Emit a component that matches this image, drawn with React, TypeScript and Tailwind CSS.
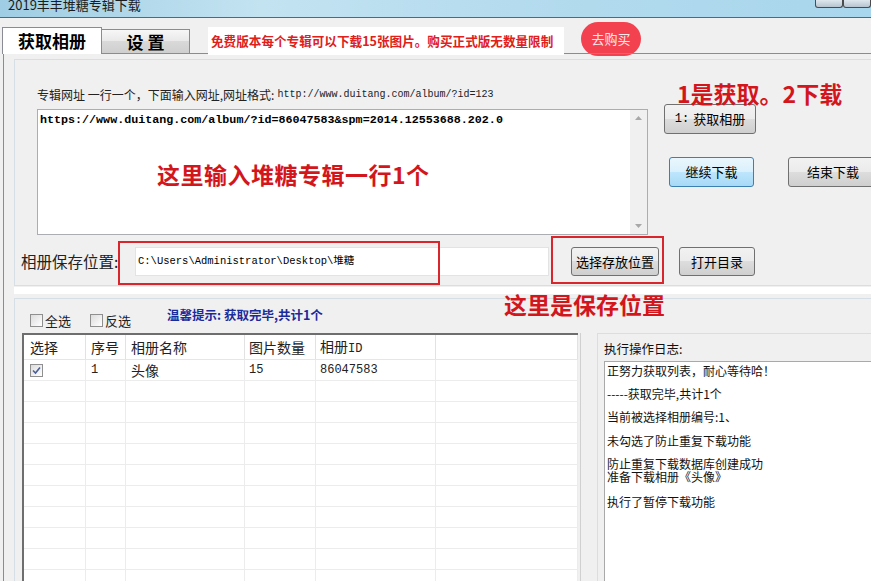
import clsx from 'clsx';

const cjk = "font-['Noto_Sans_CJK_SC',sans-serif]";
const mono = "font-['Liberation_Mono','Noto_Sans_CJK_SC',monospace]";

function WinButton({
  children,
  className,
  focused,
}: {
  children: React.ReactNode;
  className?: string;
  focused?: boolean;
}) {
  return (
    <div
      className={clsx(
        'flex shrink-0 items-center justify-center rounded-[3px] border text-[13px] text-black',
        focused
          ? 'border-[#3c7fb1] bg-[linear-gradient(#eaf6fd,#d9f0fc_50%,#bee6fd_50%,#a7d9f5)]'
          : 'border-[#707070] bg-[linear-gradient(#f2f2f2,#ebebeb_50%,#dddddd_50%,#cfcfcf)]',
        className,
      )}
    >
      {children}
    </div>
  );
}

function CheckBox({ checked }: { checked?: boolean }) {
  return (
    <div className="flex h-[13px] w-[13px] shrink-0 items-center justify-center border border-[#8f8f8f] bg-[linear-gradient(135deg,#dcdcdc,#ffffff)]">
      {checked && (
        <svg width="9" height="9" viewBox="0 0 9 9">
          <path d="M1 4.5 L3.5 7 L8 1.5" fill="none" stroke="#4a5f97" strokeWidth="1.6" />
        </svg>
      )}
    </div>
  );
}

const cols = [
  { w: 'w-[62px]', pl: 'pl-[6px]', head: '选择' },
  { w: 'w-[40px]', pl: 'pl-[5px]', head: '序号' },
  { w: 'w-[119px]', pl: 'pl-[5px]', head: '相册名称' },
  { w: 'w-[71px]', pl: 'pl-[4px]', head: '图片数量' },
  { w: 'w-[120px]', pl: 'pl-[4px]', head: '相册ID' },
  { w: 'flex-1', pl: 'pl-[4px]', head: '' },
];

const logLines = [
  { text: '正努力获取列表，耐心等待哈！', mt: 'mt-[2px]' },
  { text: '-----获取完毕,共计1个', mt: 'mt-[10px]' },
  { text: '当前被选择相册编号:1、', mt: 'mt-[10px]' },
  { text: '未勾选了防止重复下载功能', mt: 'mt-[11px]' },
  { text: '防止重复下载数据库创建成功', mt: 'mt-[10px]' },
  { text: '准备下载相册《头像》', mt: 'mt-0' },
  { text: '执行了暂停下载功能', mt: 'mt-[12px]' },
];

export default function App() {
  return (
    <div className={clsx('relative flex h-[581px] w-[871px] flex-col overflow-hidden bg-[#f0f0f0]', cjk)}>
      {/* title bar */}
      <div className="relative flex h-[18px] shrink-0 items-start border-b border-[#4d6a80] bg-[linear-gradient(90deg,#9fcde3,#c3e3f1_30%,#b4dbee_60%,#a8d6ec)]">
        <div className="ml-[8px] mt-[-4px] text-[13px] leading-[18px] text-[#1c1c1c]">2019丰丰堆糖专辑下载</div>
        <div className="ml-auto mr-0 flex h-[8px]">
          <div className="h-[8px] w-[28px] rounded-b-[3px] border border-t-0 border-[#4b4b4b] bg-[linear-gradient(#dfe7ee,#b6c3cf)]" />
          <div className="h-[8px] w-[28px] rounded-b-[3px] border border-t-0 border-[#4b4b4b] bg-[linear-gradient(#dfe7ee,#b6c3cf)]" />
        </div>
      </div>

      {/* tab strip */}
      <div className="flex h-[35px] shrink-0 items-start">
        <div className="relative z-10 ml-[2px] mt-[9px] flex h-[27px] w-[100px] items-center justify-center border border-b-0 border-[#898c95] bg-white text-[17px] font-bold text-black">
          获取相册
        </div>
        <div className="mt-[11px] flex h-[24px] w-[88px] items-center justify-center border border-l-0 border-b-0 border-[#898c95] bg-[linear-gradient(#f7f7f7,#e8e8e8_50%,#d9d9d9_50%,#cfcfcf)] text-[17px] font-bold text-black">
          设&nbsp;置
        </div>
        <div className="relative z-10 ml-[18px] mt-[9px] flex h-[28px] w-[356px] items-center whitespace-nowrap bg-white pl-[3px] text-[12.6px] font-bold text-[#e0201b]">
          免费版本每个专辑可以下载15张图片。购买正式版无数量限制
        </div>
        <div className="ml-[17px] mt-[4px] flex h-[34px] w-[60px] items-center justify-center rounded-[17px] bg-[#f4414f] text-[13px] text-[#ffe9ea]">
          去购买
        </div>
      </div>

      {/* tab body */}
      <div className="ml-[3px] flex flex-1 flex-col border-l border-t border-[#898c95]">
        {/* top group */}
        <div className="ml-[10px] mt-[5px] h-[227px] w-[880px] shrink-0 border border-[#d5dfe5]">
          <div className="flex">
            <div className="ml-[22px] flex w-[611px] flex-col">
              <div className="mt-[28px] flex items-center text-[12px] leading-[14px] text-[#222]">
                <span>专辑网址 一行一个，下面输入网址,网址格式:</span>
                <span className={clsx('ml-[3px] text-[10px]', mono)}>http://www.duitang.com/album/?id=123</span>
              </div>
              <div className="mt-[7px] flex h-[126px] border border-[#abadb3] bg-white">
                <div className={clsx('flex-1 pl-[2px] pt-[3px] text-[11.7px] font-bold leading-[14px] text-black', mono)}>
                  https://www.duitang.com/album/?id=86047583&amp;spm=2014.12553688.202.0
                </div>
                <div className="flex w-[17px] flex-col items-center justify-between bg-[#f0f0f0] py-[6px]">
                  <svg width="7" height="4" viewBox="0 0 7 4">
                    <path d="M0 4 L3.5 0 L7 4 Z" fill="#a8a8a8" />
                  </svg>
                  <svg width="7" height="4" viewBox="0 0 7 4">
                    <path d="M0 0 L3.5 4 L7 0 Z" fill="#a8a8a8" />
                  </svg>
                </div>
              </div>
            </div>
            <div className="ml-[16px] flex flex-col">
              <WinButton className="mt-[44px] h-[30px] w-[92px]">
                <span className={clsx('text-[12px]', mono)}>1:</span>
                <span className="ml-[4px]">获取相册</span>
              </WinButton>
              <div className="mt-[23px] flex">
                <WinButton focused className="ml-[5px] h-[30px] w-[85px]">
                  继续下载
                </WinButton>
                <WinButton className="ml-[34px] h-[30px] w-[90px]">结束下载</WinButton>
              </div>
            </div>
          </div>

          {/* save row */}
          <div className="mt-[11px] flex h-[31px] items-center">
            <div className="ml-[6px] w-[114px] text-[15.5px] text-[#222]">相册保存位置:</div>
            <div className="flex h-[29px] w-[414px] items-center border border-[#e3e3e3] bg-white pl-[2px]">
              <span className={clsx('text-[10.5px] text-black', mono)}>C:\Users\Administrator\Desktop\堆糖</span>
            </div>
            <WinButton className="ml-[22px] h-[29px] w-[88px]">选择存放位置</WinButton>
            <WinButton className="ml-[20px] h-[29px] w-[76px]">打开目录</WinButton>
          </div>
        </div>

        <div className="ml-[10px] mt-[1px] h-[7px] w-[880px] shrink-0 bg-white" />

        {/* bottom group */}
        <div className="ml-[10px] mt-[4px] flex w-[880px] flex-1 flex-col border border-[#d5dfe5]">
          <div className="flex h-[34px] items-end pb-[3px]">
            <div className="ml-[15px] flex items-center">
              <CheckBox />
              <span className="ml-[2px] text-[13px] text-[#222]">全选</span>
            </div>
            <div className="ml-[19px] flex items-center">
              <CheckBox />
              <span className="ml-[2px] text-[13px] text-[#222]">反选</span>
            </div>
            <div className="mb-[5px] ml-[36px] text-[12.5px] font-bold text-[#1b2a9a]">温馨提示: 获取完毕,共计1个</div>
          </div>

          <div className="flex flex-1">
            {/* table */}
            <div className="ml-[7px] flex w-[556px] flex-col border-l-2 border-t-2 border-[#6e6e6e] bg-white">
              <div className="flex h-[25px] border-b border-[#e6e6e6]">
                {cols.map((c, i) => (
                  <div
                    key={i}
                    className={clsx('flex items-center border-r border-[#e2e2e2] text-[14px] text-[#222]', c.w, c.pl)}
                  >
                    {c.head === '相册ID' ? (
                      <span>
                        相册<span className={clsx('text-[12px]', mono)}>ID</span>
                      </span>
                    ) : (
                      c.head
                    )}
                  </div>
                ))}
              </div>
              {Array.from({ length: 11 }, (_, r) => (
                <div key={r} className="flex h-[21px] shrink-0 border-b border-[#ececec]">
                  {cols.map((c, i) => (
                    <div
                      key={i}
                      className={clsx('flex items-center border-r border-[#ececec] text-[#222]', c.w, c.pl)}
                    >
                      {r === 0 && i === 0 && <CheckBox checked />}
                      {r === 0 && i === 1 && <span className={clsx('text-[12px]', mono)}>1</span>}
                      {r === 0 && i === 2 && <span className="text-[14px]">头像</span>}
                      {r === 0 && i === 3 && <span className={clsx('text-[12px]', mono)}>15</span>}
                      {r === 0 && i === 4 && <span className={clsx('text-[12px]', mono)}>86047583</span>}
                    </div>
                  ))}
                </div>
              ))}
            </div>
            <div className="ml-[2px] w-[1px] bg-[#d0d0d0]" />

            {/* log */}
            <div className="ml-[16px] flex flex-1 flex-col border-l border-t border-[#d5dfe5]">
              <div className="ml-[6px] mt-[7px] text-[12.5px] leading-[16px] text-[#111]">执行操作日志:</div>
              <div className="ml-[6px] mt-[4px] flex flex-1 flex-col border-l border-t border-[#a9a9a9] bg-white pl-[2px]">
                {logLines.map((l, i) => (
                  <div key={i} className={clsx('text-[12px] leading-[13px] text-[#111]', l.mt)}>
                    {l.text}
                  </div>
                ))}
              </div>
            </div>
          </div>
        </div>
      </div>

      {/* annotations drawn over the window */}
      <div className="absolute left-[157px] top-[157px] text-[23px] font-bold tracking-[0.5px] text-[#d3161c]">
        这里输入堆糖专辑一行1个
      </div>
      <div className="absolute left-[677px] top-[76px] text-[23px] font-bold text-[#d3161c]">1是获取。2下载</div>
      <div className="absolute left-[504px] top-[287px] text-[23px] font-bold text-[#d3161c]">这里是保存位置</div>
      <div className="absolute left-[118px] top-[241px] h-[44px] w-[322px] border-2 border-[#d9262c]" />
      <div className="absolute left-[551px] top-[236px] h-[48px] w-[113px] border-2 border-[#d9262c]" />
    </div>
  );
}
